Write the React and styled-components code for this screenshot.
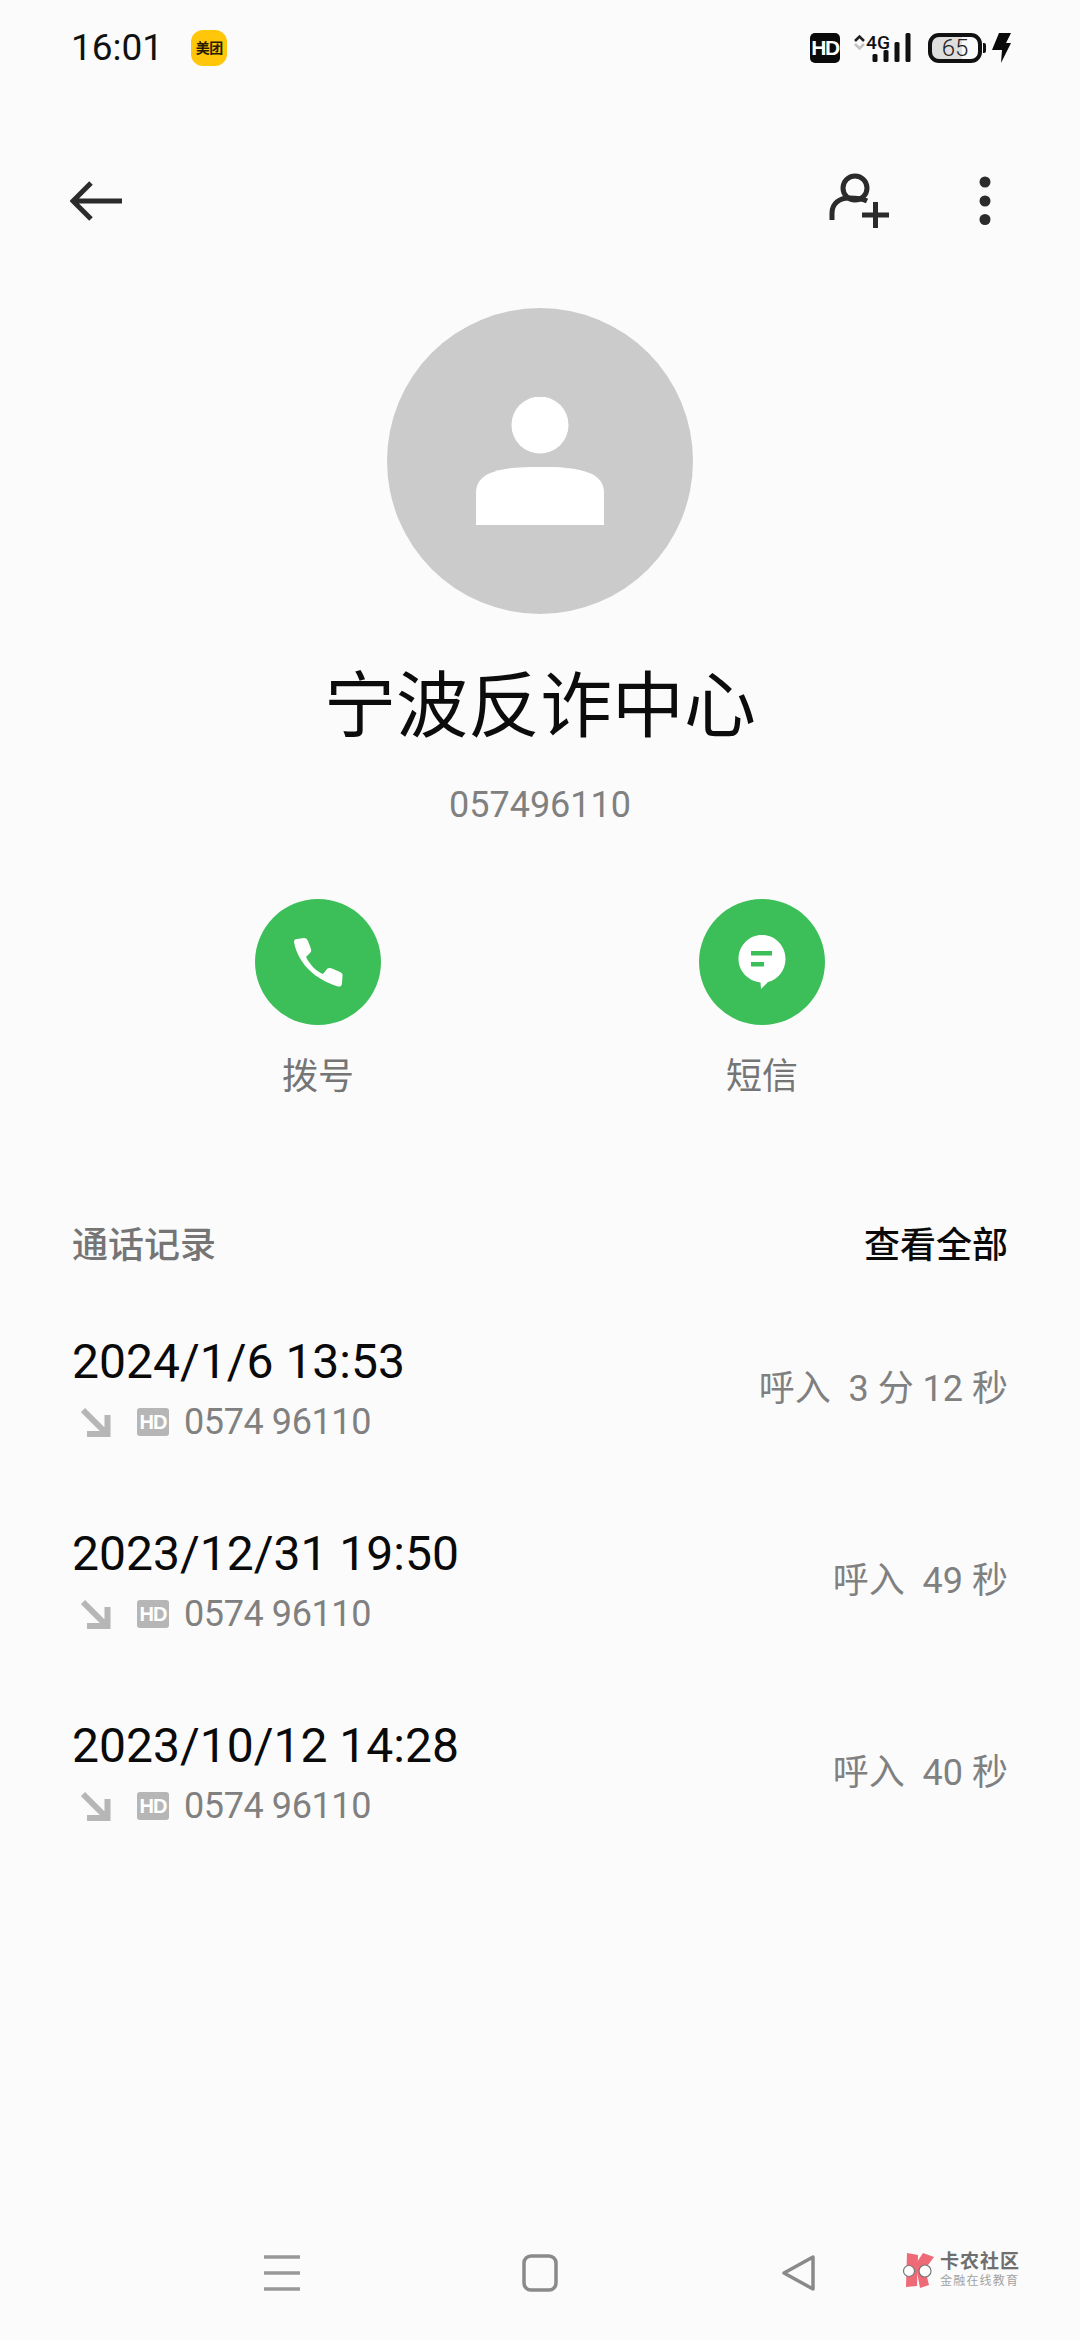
import React from 'react';
import styled, { createGlobalStyle } from 'styled-components';

const GlobalStyle = createGlobalStyle`
  html, body {
    margin: 0;
    padding: 0;
    background: #fbfbfb;
  }
  * {
    box-sizing: border-box;
  }
`;

const FONT = `Roboto, "Noto Sans CJK SC", sans-serif`;

const Page = styled.div`
  position: relative;
  width: 1080px;
  height: 2340px;
  overflow: hidden;
  display: flex;
  flex-direction: column;
  background: #fbfbfb;
  font-family: ${FONT};
`;

const StatusBar = styled.div`
  height: 96px;
  padding: 0 69px 0 71px;
  display: flex;
  align-items: center;
`;

const Clock = styled.div`
  font-size: 37px;
  line-height: 48px;
  letter-spacing: 0;
  color: #111;
`;

const AppBadge = styled.div`
  width: 36px;
  height: 36px;
  margin-left: 28px;
  border-radius: 12px;
  background: #ffc60a;
  color: #2a1a00;
  font-size: 14px;
  font-weight: 700;
  line-height: 36px;
  text-align: center;
  letter-spacing: -0.5px;
`;

const StatusRight = styled.div`
  margin-left: auto;
  display: flex;
  align-items: center;
`;

const HdMark = styled.div`
  width: 30px;
  height: 30px;
  border-radius: 5px;
  background: #0a0a0a;
  color: #fff;
  font-family: "Liberation Sans", sans-serif;
  font-size: 21px;
  font-weight: 700;
  line-height: 30px;
  text-align: center;
  letter-spacing: -1.5px;
`;

const Signal = styled.svg`
  display: block;
  width: 60px;
  height: 30px;
  margin-left: 14px;
`;

const Battery = styled.div`
  width: 54px;
  height: 30px;
  margin-left: 14px;
  border: 4px solid #111;
  border-radius: 11px;
  background: linear-gradient(90deg, #dedede 0 65%, transparent 65%);
  color: #222;
  font-size: 24px;
  font-weight: 300;
  line-height: 22px;
  text-align: center;
`;

const BatteryTip = styled.div`
  width: 3px;
  height: 10px;
  margin-left: 1px;
  border-radius: 0 2px 2px 0;
  background: #111;
`;

const Bolt = styled.svg`
  display: block;
  width: 19px;
  height: 30px;
  margin-left: 6px;
`;

const ActionBar = styled.div`
  height: 84px;
  margin-top: 63px;
  padding: 0 89px 0 70px;
  display: flex;
  align-items: center;
  justify-content: space-between;
`;

const BackIcon = styled.svg`
  display: block;
  width: 54px;
  height: 40px;
`;

const ActionRight = styled.div`
  display: flex;
  align-items: center;
  gap: 90px;
`;

const AddIcon = styled.svg`
  display: block;
  width: 60px;
  height: 56px;
`;

const MoreIcon = styled.svg`
  display: block;
  width: 12px;
  height: 50px;
`;

const Profile = styled.div`
  margin-top: 65px;
  display: flex;
  flex-direction: column;
  align-items: center;
`;

const Avatar = styled.div`
  width: 306px;
  height: 306px;
  border-radius: 50%;
  background: #cbcbcb;
  display: flex;
  align-items: center;
  justify-content: center;
`;

const AvatarIcon = styled.svg`
  display: block;
  width: 128px;
  height: 128px;
`;

const Name = styled.div`
  margin-top: 51px;
  font-size: 72px;
  line-height: 84px;
  color: #0c0c0c;
`;

const Phone = styled.div`
  margin-top: 35px;
  font-size: 36px;
  line-height: 42px;
  color: #808080;
`;

const Actions = styled.div`
  margin-top: 73px;
  padding: 0 255px;
  display: flex;
  justify-content: space-between;
`;

const ActionItem = styled.div`
  width: 126px;
  display: flex;
  flex-direction: column;
  align-items: center;
`;

const GreenCircle = styled.div`
  width: 126px;
  height: 126px;
  border-radius: 50%;
  background: #3cbf58;
  display: flex;
  align-items: center;
  justify-content: center;
`;

const CircleIcon = styled.svg`
  display: block;
  width: 52px;
  height: 54px;
`;

const ActionLabel = styled.div`
  margin-top: 31px;
  font-size: 36px;
  line-height: 42px;
  color: #757575;
  white-space: nowrap;
`;

const SectionHead = styled.div`
  margin-top: 127px;
  padding: 0 72px;
  display: flex;
  justify-content: space-between;
  align-items: center;
  font-size: 36px;
  line-height: 42px;
`;

const SectionTitle = styled.div`
  color: #757575;
  font-weight: 500;
`;

const SectionLink = styled.div`
  color: #0a0a0a;
  font-weight: 500;
`;

const Records = styled.div`
  margin-top: 36px;
  display: flex;
  flex-direction: column;
`;

const Record = styled.div`
  height: 192px;
  padding: 30px 72px 0;
  display: flex;
  justify-content: space-between;
  align-items: flex-start;
`;

const RecordDate = styled.div`
  font-size: 48px;
  line-height: 58px;
  color: #0a0a0a;
`;

const RecordMeta = styled.div`
  margin-top: 8px;
  display: flex;
  align-items: center;
  height: 46px;
  padding-left: 9px;
`;

const InArrow = styled.svg`
  display: block;
  width: 30px;
  height: 30px;
`;

const HdTag = styled.div`
  width: 32px;
  height: 28px;
  margin-left: 26px;
  border-radius: 3px;
  background: #b6b6b6;
  color: #fff;
  font-family: "Liberation Sans", sans-serif;
  font-size: 20px;
  font-weight: 700;
  line-height: 28px;
  text-align: center;
  letter-spacing: -1px;
`;

const RecordNumber = styled.div`
  margin-left: 15px;
  font-size: 36px;
  line-height: 46px;
  color: #808080;
  letter-spacing: -0.4px;
`;

const RecordInfo = styled.div`
  margin-top: 35px;
  font-size: 36px;
  line-height: 42px;
  color: #808080;
  white-space: pre;
`;

const NavBar = styled.div`
  margin-top: auto;
  height: 134px;
  padding-left: 264px;
  display: flex;
  align-items: center;
`;

const NavMenu = styled.svg`
  display: block;
  width: 38px;
  height: 38px;
`;

const NavHome = styled.svg`
  display: block;
  width: 38px;
  height: 38px;
  margin-left: 220px;
`;

const NavBack = styled.svg`
  display: block;
  width: 38px;
  height: 38px;
  margin-left: 221px;
`;

const Watermark = styled.div`
  position: absolute;
  left: 902px;
  top: 2252px;
  display: flex;
  align-items: center;
  gap: 4px;
`;

const WatermarkLogo = styled.svg`
  display: block;
  width: 34px;
  height: 36px;
`;

const WatermarkText = styled.div`
  display: flex;
  flex-direction: column;
  gap: 3px;
`;

const WatermarkTitle = styled.div`
  font-size: 19px;
  line-height: 20px;
  font-weight: 700;
  color: #6f6f6f;
  letter-spacing: 1px;
  white-space: nowrap;
`;

const WatermarkSub = styled.div`
  font-size: 12px;
  line-height: 13px;
  color: #a3a3a3;
  letter-spacing: 1.2px;
  white-space: nowrap;
`;

const records = [
  { date: '2024/1/6 13:53', info: '呼入  3 分 12 秒' },
  { date: '2023/12/31 19:50', info: '呼入  49 秒' },
  { date: '2023/10/12 14:28', info: '呼入  40 秒' },
];

function SignalIcon() {
  return (
    <Signal viewBox="0 0 60 30">
      <path d="M1 8 L5.5 3.5 L10 8" fill="none" stroke="#222" strokeWidth="2.6" />
      <path d="M1 11 L5.5 15.5 L10 11" fill="none" stroke="#c4c4c4" strokeWidth="2.6" />
      <text x="12" y="16" fontFamily="Roboto, sans-serif" fontSize="18" fontWeight="500" fill="#111" textLength="24" lengthAdjust="spacingAndGlyphs">4G</text>
      <rect x="18.5" y="21" width="5" height="8" rx="1.5" fill="#111" />
      <rect x="29.5" y="17" width="5" height="12" rx="1.5" fill="#111" />
      <rect x="40.5" y="9" width="5" height="20" rx="1.5" fill="#111" />
      <rect x="51.5" y="0" width="5" height="29" rx="1.5" fill="#111" />
    </Signal>
  );
}

function App() {
  return (
    <Page>
      <GlobalStyle />
      <StatusBar>
        <Clock>16:01</Clock>
        <AppBadge>美团</AppBadge>
        <StatusRight>
          <HdMark>HD</HdMark>
          <SignalIcon />
          <Battery>65</Battery>
          <BatteryTip />
          <Bolt viewBox="0 0 19 30">
            <path d="M7 0 L19 0 L14 10 L19 10 L9 30 L10 17 L0 17 Z" fill="#0a0a0a" />
          </Bolt>
        </StatusRight>
      </StatusBar>

      <ActionBar>
        <BackIcon viewBox="0 0 54 40">
          <path d="M52 20 H4 M21 2 L3 20 L21 38" fill="none" stroke="#2b2b2b" strokeWidth="5" />
        </BackIcon>
        <ActionRight>
          <AddIcon viewBox="0 0 60 56">
            <circle cx="26" cy="15" r="12" fill="none" stroke="#2b2b2b" strokeWidth="5" />
            <path d="M3 47 V40 C3 30 11 25 20 25 C26 25 32 25 38 28" fill="none" stroke="#2b2b2b" strokeWidth="5" />
            <path d="M33 42 H60 M46.5 29 V55" fill="none" stroke="#2b2b2b" strokeWidth="5" />
          </AddIcon>
          <MoreIcon viewBox="0 0 12 50">
            <circle cx="6" cy="6" r="5.5" fill="#2b2b2b" />
            <circle cx="6" cy="25" r="5.5" fill="#2b2b2b" />
            <circle cx="6" cy="43.5" r="5.5" fill="#2b2b2b" />
          </MoreIcon>
        </ActionRight>
      </ActionBar>

      <Profile>
        <Avatar>
          <AvatarIcon viewBox="0 0 128 128">
            <circle cx="64" cy="28" r="28.5" fill="#fff" />
            <path d="M0 128 V96 C0 86 5 81 12 77 C28 70 46 70 64 70 C82 70 100 70 116 77 C123 81 128 86 128 96 V128 Z" fill="#fff" />
          </AvatarIcon>
        </Avatar>
        <Name>宁波反诈中心</Name>
        <Phone>057496110</Phone>
      </Profile>

      <Actions>
        <ActionItem>
          <GreenCircle>
            <CircleIcon viewBox="0 0 52 54">
              <path d="M2 7 C2 5 3 4 5 4 L12 3 C14 3 15 4 16 6 L19 14 C19.5 16 19 17 18 18 L14 22 C18 30 24 36 31 39 L35 34 C36 33 38 32.5 40 33.5 L48 37 C50 38 51 39 50.5 41 L50 48 C50 51 48 52 46 51.5 C22 44 6 28 2 7 Z" fill="#fff" />
            </CircleIcon>
          </GreenCircle>
          <ActionLabel>拨号</ActionLabel>
        </ActionItem>
        <ActionItem>
          <GreenCircle>
            <CircleIcon viewBox="0 0 52 54">
              <path d="M26 0 C39 0 49.5 10.5 49.5 24 C49.5 36 41 45 32 47 L25 54 L24.5 47.5 C12 46 2.5 36 2.5 24 C2.5 10.5 13 0 26 0 Z" fill="#fff" />
              <rect x="15" y="16" width="21" height="4.5" fill="#3cbf58" />
              <rect x="15" y="27" width="13" height="4.5" fill="#3cbf58" />
            </CircleIcon>
          </GreenCircle>
          <ActionLabel>短信</ActionLabel>
        </ActionItem>
      </Actions>

      <SectionHead>
        <SectionTitle>通话记录</SectionTitle>
        <SectionLink>查看全部</SectionLink>
      </SectionHead>

      <Records>
        {records.map(r => (
          <Record key={r.date}>
            <div>
              <RecordDate>{r.date}</RecordDate>
              <RecordMeta>
                <InArrow viewBox="0 0 30 30">
                  <path d="M2 3 L26 27 M26.5 8 V27 H6" fill="none" stroke="#b6b6b6" strokeWidth="6" />
                </InArrow>
                <HdTag>HD</HdTag>
                <RecordNumber>0574 96110</RecordNumber>
              </RecordMeta>
            </div>
            <RecordInfo>{r.info}</RecordInfo>
          </Record>
        ))}
      </Records>

      <NavBar>
        <NavMenu viewBox="0 0 38 38">
          <path d="M0 3 H36 M0 19 H36 M0 35 H36" stroke="#999" strokeWidth="3.5" />
        </NavMenu>
        <NavHome viewBox="0 0 38 38">
          <rect x="2" y="2" width="32" height="34" rx="7" fill="none" stroke="#8a8a8a" strokeWidth="3.5" />
        </NavHome>
        <NavBack viewBox="0 0 38 38">
          <path d="M32 3 V35 L3 19 Z" fill="none" stroke="#8a8a8a" strokeWidth="3.5" strokeLinejoin="round" />
        </NavBack>
      </NavBar>

      <Watermark>
        <WatermarkLogo viewBox="0 0 34 36">
          <path d="M5 1 L16 3 L15 34 L4 35 Z" fill="#ee6a76" />
          <path d="M15 10 L21 1 L32 5 L23 17 L27 33 L18 36 L15 20 Z" fill="#ee6a76" />
          <circle cx="7" cy="19" r="5.5" fill="#fff" stroke="#777" strokeWidth="1.2" />
          <circle cx="23" cy="19" r="6" fill="#fff" stroke="#777" strokeWidth="1.2" />
        </WatermarkLogo>
        <WatermarkText>
          <WatermarkTitle>卡农社区</WatermarkTitle>
          <WatermarkSub>金融在线教育</WatermarkSub>
        </WatermarkText>
      </Watermark>
    </Page>
  );
}

export default App;
